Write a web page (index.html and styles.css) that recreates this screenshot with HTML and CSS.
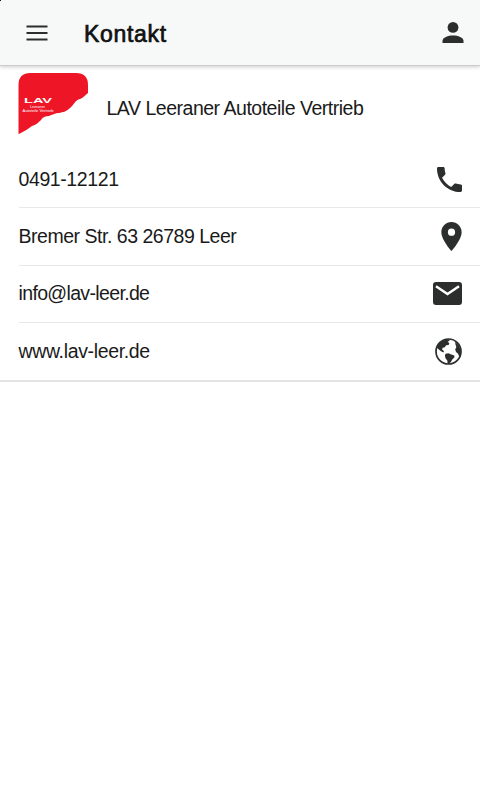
FILE: index.html
```html
<!DOCTYPE html>
<html lang="de">

<head>
    <meta charset="UTF-8">
    <meta name="viewport" content="width=device-width, initial-scale=1">
    <title>Kontakt</title>
    <link rel="stylesheet" href="styles.css">
</head>

<body>
    <header class="toolbar">
        <svg class="menu" viewBox="0 0 22 16">
            <path d="M.5 1.5h21M.5 8h21M.5 14.5h21" />
        </svg>
        <h1 class="title">Kontakt</h1>
        <svg class="user" viewBox="0 0 22 22">
            <circle cx="11" cy="5.4" r="5.4" />
            <path d="M.5 21v-2.2C.5 15.3 6 13.4 11 13.4s10.5 1.9 10.5 5.4V21z" />
        </svg>
    </header>

    <ul class="list">
        <li class="company">
            <svg class="logo" viewBox="0 0 70 62">
                <path d="M.5 61V12Q.5 0 12.5 0H58q12 0 12 12v8c-3 2-5 5-8 6-5 1-6 6-10 9-4 4-7 4-11 5-4 0-7 2-10 3-4 0-6 1-8 4-3 3-5 5-9 6-4 3-9 6-13 8z" />
                <text class="logo_name" x="6" y="30" textLength="28" lengthAdjust="spacingAndGlyphs">LAV</text>
                <text class="logo_sub" x="12" y="34.5" textLength="15" lengthAdjust="spacingAndGlyphs">Leeraner</text>
                <text class="logo_sub" x="4.5" y="38.5" textLength="31" lengthAdjust="spacingAndGlyphs">Autoteile Vertrieb</text>
            </svg>
            <span class="company_name">LAV Leeraner Autoteile Vertrieb</span>
        </li>
        <li class="row">
            <span class="phone_text">0491-12121</span>
            <svg class="phone" viewBox="3 3 18 18">
                <path d="M6.62 10.79c1.44 2.83 3.76 5.14 6.59 6.59l2.2-2.2c.27-.27.67-.36 1.02-.24 1.12.37 2.33.57 3.57.57.55 0 1 .45 1 1V20c0 .55-.45 1-1 1C10.61 21 3 13.39 3 4c0-.55.45-1 1-1h3.5c.55 0 1 .45 1 1 0 1.25.2 2.45.57 3.57.11.35.03.74-.25 1.02z" />
            </svg>
        </li>
        <li class="row">
            <span class="address_text">Bremer Str. 63 26789 Leer</span>
            <svg class="pin" viewBox="5 2 14 20">
                <path d="M12 2C8.13 2 5 5.13 5 9c0 5.25 7 13 7 13s7-7.75 7-13c0-3.87-3.13-7-7-7zm0 9.5a2.5 2.5 0 1 1 0-5 2.5 2.5 0 0 1 0 5z" />
            </svg>
        </li>
        <li class="row">
            <span class="mail_text">info@lav-leer.de</span>
            <svg class="mail" viewBox="0 0 29 23">
                <rect width="29" height="23" rx="3" />
                <path class="flap" d="M3 4.3l11.5 7.7L26 4.3" />
            </svg>
        </li>
        <li class="row">
            <span class="web_text">www.lav-leer.de</span>
            <svg class="globe" viewBox="0 0 27 27">
                <circle class="ring" cx="13.5" cy="13.5" r="12.5" />
                <path d="M7 3.1C9 1.8 11.5 1.2 13.8 1.3l.9 1.5-2.1.9 1.8 1.5-.8 1.8-2.4.3-1.7 2.2-2 .3-.3 2 1.8 1.2-.5 1.5-2.5-1.2L3.2 11 1.8 9.5C2.5 7 4.5 4.5 7 3.1z" />
                <path d="M10.5 15.7l3-.4 2.8 1.3 3 .9.2 1.8-2.2 2.2-1.4 2.4-2 2.2-1.3-.4-.3-3.3-1.7-2-.7-2.6z" />
                <path d="M20 3.6l3.7 3.6 1.9 4.3v4.7l-1.2 2.8-1.5-3.5-1.9-1.4-.8-2.8 1.2-2.2-.8-2z" />
            </svg>
        </li>
    </ul>
    <i class="corner"></i>
</body>

</html>
```
FILE: styles.css
```css
* {
    margin: 0;
    padding: 0;
    box-sizing: border-box;
}

body {
    background-color: #fff;
    color: #1a1a1a;
    font-family: "Liberation Sans", Arial, sans-serif;
    font-size: 19.5px;
    letter-spacing: -.48px;
}

svg {
    display: block;
    flex: none;
    fill: #2c2e2e;
}

/* header */
.toolbar {
    display: flex;
    align-items: center;
    height: 66px;
    padding: 0 16px 0 26px;
    background-color: #f7f9f8;
    border-bottom: 1px solid #cbcccc;
    box-shadow: 0 1px 4px rgba(0, 0, 0, .2);
}

.menu {
    width: 22px;
    height: 16px;
    stroke: #2c2e2e;
    stroke-width: 1.9;
}

.title {
    margin-left: 36px;
    padding-top: 2px;
    color: #111;
    font-size: 23px;
    font-weight: normal;
    letter-spacing: .7px;
    line-height: 28px;
    -webkit-text-stroke: .7px #111;
}

.user {
    width: 22px;
    height: 22px;
    margin-left: auto;
}

/* contact list */
.list {
    list-style: none;
    border-bottom: 2px solid #e3e3e3;
}

.company {
    display: flex;
    align-items: center;
    height: 85px;
    padding: 0 18px;
}

.logo {
    width: 70px;
    height: 62px;
    margin-top: -9px;
}

.logo path {
    fill: #ee1526;
}

.logo text {
    fill: #fff;
    letter-spacing: 0;
}

.logo_name {
    font-size: 8px;
    font-weight: bold;
}

.logo_sub {
    font-size: 3.5px;
}

.company_name {
    margin-left: 18.5px;
}

.row {
    display: flex;
    align-items: center;
    justify-content: space-between;
    height: 57.3px;
    margin-left: 18.5px;
    padding: 0 18px 0 0;
    border-bottom: 1px solid #e8e8e8;
}

.row:last-child {
    border-bottom: none;
}

.phone_text {
    letter-spacing: -.4px;
}

.mail_text {
    letter-spacing: -.65px;
}

.web_text {
    letter-spacing: -.35px;
}

.phone {
    width: 25px;
    height: 25px;
}

.pin {
    width: 21px;
    height: 29px;
}

.mail {
    width: 29px;
    height: 23px;
}

.flap {
    fill: none;
    stroke: #fff;
    stroke-width: 2.4;
}

.globe {
    width: 27px;
    height: 27px;
}

.ring {
    fill: none;
    stroke: #2c2e2e;
    stroke-width: 1.7;
}

/* dark pixel in the screen corner */
.corner {
    position: absolute;
    top: 0;
    left: 0;
    width: 1px;
    height: 1px;
    background-color: #101030;
}
```
